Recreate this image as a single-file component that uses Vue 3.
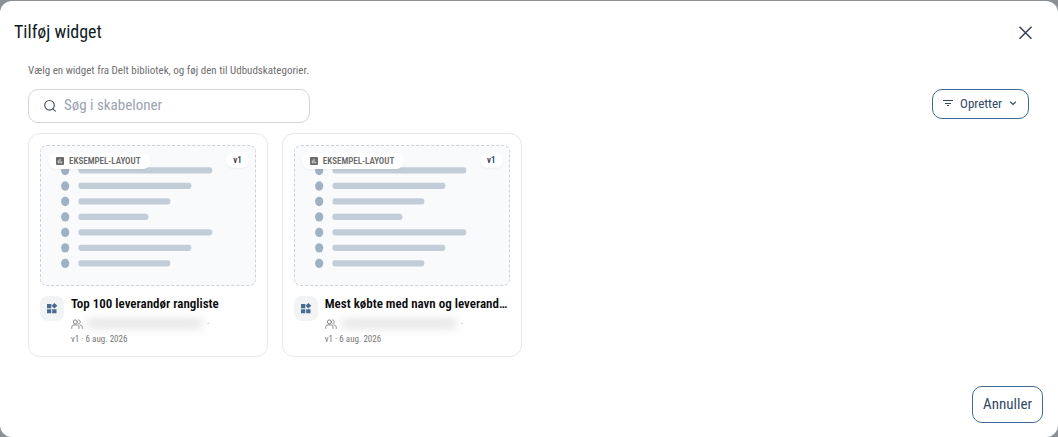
<script setup>
import { computed, ref } from "vue";

const search = ref("");

const widgets = [
  { id: 1, title: "Top 100 leverandør rangliste", version: "v1", date: "6 aug. 2026" },
  { id: 2, title: "Mest købte med navn og leverandør", version: "v1", date: "6 aug. 2026" },
];

const filtered = computed(() =>
  widgets.filter((w) => w.title.toLowerCase().includes(search.value.toLowerCase()))
);

// placeholder list in the preview
const bars = [134, 113, 92, 70, 134, 113, 92];
</script>

<template>
  <div class="overlay">
    <div class="modal" role="dialog" aria-labelledby="modal-title">
      <header class="modal-header">
        <h2 id="modal-title">Tilføj widget</h2>
        <button class="close" type="button" aria-label="Luk">
          <svg width="20" height="20" viewBox="0 0 20 20" fill="none" stroke="currentColor" stroke-width="1.5">
            <path d="M4.5 4.7l12 12M16.5 4.7l-12 12" />
          </svg>
        </button>
      </header>

      <main class="modal-body">
        <p class="intro">Vælg en widget fra Delt bibliotek, og føj den til Udbudskategorier.</p>

        <div class="toolbar">
          <label class="search">
            <svg width="14" height="14" viewBox="0 0 14 14" fill="none" stroke="currentColor" stroke-width="1.2" stroke-linecap="round">
              <circle cx="6.5" cy="6.3" r="4.8" />
              <path d="M10 9.9L12.3 12.2" />
            </svg>
            <input v-model="search" type="text" placeholder="Søg i skabeloner" aria-label="Søg i skabeloner" />
          </label>

          <button class="filter" type="button">
            <svg width="12" height="12" viewBox="0 0 12 12" stroke="currentColor" stroke-width="1">
              <path d="M1 3.5h10M3 6.5h6M5 8.5h2" />
            </svg>
            <span>Opretter</span>
            <svg class="chevron" width="8" height="8" viewBox="0 0 8 8" fill="none" stroke="currentColor" stroke-width="1.2">
              <path d="M1.2 2.8L4 5.5l2.8-2.7" />
            </svg>
          </button>
        </div>

        <div class="grid">
          <article v-for="w in filtered" :key="w.id" class="card">
            <div class="preview">
              <svg class="skeleton" viewBox="0 0 214 139">
                <g v-for="(width, i) in bars" :key="i">
                  <ellipse cx="24.2" :cy="24.5 + i * 15.5" rx="4.1" ry="4.7" fill="#a0b1c3" />
                  <rect x="37.5" :y="21.4 + i * 15.5" :width="width" height="6.2" rx="2.5" fill="#c3cdd8" />
                </g>
              </svg>
              <span class="badge layout">
                <svg width="8" height="8" viewBox="0 0 8 8">
                  <rect width="8" height="8" rx="1" fill="#6b6b6b" />
                  <path d="M2.3 6.3V3.5M4 6.3V1.8M5.7 6.3V4.6" stroke="#fff" stroke-width="0.8" />
                </svg>
                EKSEMPEL-LAYOUT
              </span>
              <span class="badge version">{{ w.version }}</span>
            </div>

            <div class="info">
              <span class="type">
                <svg width="12" height="12" viewBox="0 0 12 12" fill="#4a6b91">
                  <path d="M1 2h4.3v4.2H1zM1 7.2h4.3v4.1H1zM6.2 7.2h4.3v4.1H6.2zM8.4 0.9l2.9 2.8-2.9 2.9-2.9-2.9z" />
                </svg>
              </span>
              <div class="text">
                <h3>{{ w.title }}</h3>
                <div class="creator">
                  <svg width="12" height="10" viewBox="0 0 12 10" fill="none" stroke="currentColor" stroke-width="0.9" stroke-linecap="round">
                    <circle cx="4.4" cy="2.9" r="2" />
                    <path d="M0.8 9.4V8.2c0-1.5 1-2.3 2.3-2.3h2.6C7 5.9 8 6.7 8 8.2v1.2M7.6 0.9c2.4.4 2.4 3.6 0 4M9 6c1.5.3 2.3 1.1 2.3 2.4v1" />
                  </svg>
                  <span class="name"></span>
                  <span>·</span>
                </div>
                <p class="meta">{{ w.version }} · {{ w.date }}</p>
              </div>
            </div>
          </article>
        </div>
      </main>

      <footer class="modal-footer">
        <button class="cancel" type="button">Annuller</button>
      </footer>
    </div>
  </div>
</template>

<style>
body {
  margin: 0;
  background: #8b9093;
}
</style>

<style scoped>
* {
  box-sizing: border-box;
}

.overlay {
  min-height: 100vh;
  padding-top: 1px;
  display: flex;
  background: #8b9093;
  font-family: "Roboto Condensed", "Liberation Sans Narrow", Roboto, sans-serif;
}

.modal {
  flex: 1;
  min-width: 0;
  display: flex;
  flex-direction: column;
  background: #fff;
  border-radius: 12px;
}

button,
input {
  font-family: inherit;
}

svg {
  display: block;
  flex-shrink: 0;
}

h2,
h3,
p {
  margin: 0;
}

.modal-header {
  display: flex;
  justify-content: space-between;
  align-items: center;
  padding: 16px 23px 0 14px;
}

h2 {
  font-size: 18px;
  line-height: 30px;
  font-weight: 400;
  color: #0d1b24;
}

.close {
  padding: 0;
  border: 0;
  background: none;
  color: #374151;
}

.modal-body {
  flex: 1;
  padding: 16px 29px 0 28px;
}

.intro {
  font-size: 11px;
  line-height: 16px;
  color: #6f6f6f;
}

.toolbar {
  display: flex;
  justify-content: space-between;
  align-items: flex-start;
  margin: 10px 0;
}

.search {
  display: flex;
  align-items: center;
  gap: 7px;
  width: 282px;
  height: 34px;
  padding: 0 14px;
  border: 1px solid #d1d5db;
  border-radius: 10px;
  color: #4b5563;
}

.search input {
  flex: 1;
  min-width: 0;
  padding: 0 0 2px;
  border: 0;
  outline: none;
  background: none;
  font-size: 15px;
  line-height: 20px;
}

.search input::placeholder {
  color: #9ca3af;
}

.filter {
  display: flex;
  align-items: center;
  gap: 6px;
  height: 30px;
  padding: 0 11px 2px 9px;
  border: 1px solid #426a94;
  border-radius: 10px;
  background: #fff;
  color: #2f4a66;
  font-size: 13px;
}

.chevron {
  margin-left: 1px;
}

.grid {
  display: grid;
  grid-template-columns: repeat(auto-fill, minmax(220px, 1fr));
  gap: 14px;
}

.card {
  min-width: 0;
  padding: 11px 11px 10px;
  border: 1px solid #e5e7eb;
  border-radius: 12px;
}

.preview {
  position: relative;
  border: 1px dashed #cfd0dc;
  border-radius: 7px;
  background: #f9fafc;
}

.skeleton {
  width: 100%;
  height: auto;
}

.badge {
  position: absolute;
  top: 7px;
  display: flex;
  align-items: center;
  height: 16px;
  border-radius: 8px;
  background: #fff;
  box-shadow: 0 1px 2px rgba(0, 0, 0, 0.05);
  font-size: 9px;
  font-weight: 600;
}

.layout {
  left: 7px;
  gap: 5px;
  padding: 0 10px 0 8px;
  color: #6b6b6b;
}

.version {
  top: 6px;
  right: 6px;
  padding: 0 7px;
  color: #334155;
}

.info {
  display: flex;
  gap: 7px;
  padding-top: 10px;
}

.type {
  display: flex;
  align-items: center;
  justify-content: center;
  flex-shrink: 0;
  width: 24px;
  height: 25px;
  border-radius: 8px;
  background: #f1f3f5;
}

.text {
  min-width: 0;
}

h3 {
  overflow: hidden;
  text-overflow: ellipsis;
  white-space: nowrap;
  font-size: 13px;
  line-height: 16px;
  font-weight: 600;
  color: #0a0a0a;
}

.creator {
  display: flex;
  align-items: center;
  gap: 4px;
  height: 16px;
  margin-top: 4px;
  font-size: 9px;
  color: #777;
}

.name {
  width: 116px;
  height: 9px;
  border-radius: 4px;
  background: #e2e2e2;
  filter: blur(5px);
}

.meta {
  font-size: 9px;
  line-height: 14px;
  color: #777;
}

.modal-footer {
  display: flex;
  justify-content: flex-end;
  padding: 14px 15px;
}

.cancel {
  height: 37px;
  padding: 0 10px 2px;
  border: 1px solid #426a94;
  border-radius: 10px;
  background: #fff;
  color: #2f4a66;
  font-size: 15px;
}
</style>
